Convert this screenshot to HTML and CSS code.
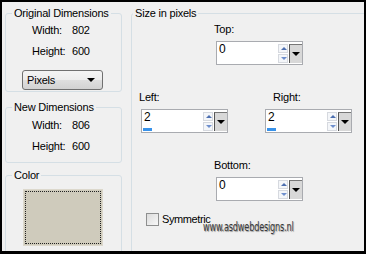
FILE: index.html
```html
<!DOCTYPE html>
<html lang="en">
<head>
  <meta charset="UTF-8">
  <title>Add Borders</title>
  <link rel="stylesheet" href="styles.css">
</head>
<body>
<div class="screen">
  <div class="dialog">
    <div class="side">
      <fieldset class="group orig">
        <legend>Original Dimensions</legend>
        <div class="inner">
          <div class="dims">
            <span>Width:</span><span>802</span>
            <span>Height:</span><span>600</span>
          </div>
          <div class="select"><span>Pixels</span><span class="caret"></span></div>
        </div>
      </fieldset>
      <fieldset class="group new">
        <legend>New Dimensions</legend>
        <div class="inner">
          <div class="dims">
            <span>Width:</span><span>806</span>
            <span>Height:</span><span>600</span>
          </div>
        </div>
      </fieldset>
      <fieldset class="group color">
        <legend>Color</legend>
        <div class="inner">
          <div class="swatch"><div class="swatch-inner"></div></div>
        </div>
      </fieldset>
    </div>

    <fieldset class="group size">
      <legend>Size in pixels</legend>
      <div class="inner">
        <div class="row center">
          <div class="field">
            <div class="label">Top:</div>
            <div class="spin">
              <div class="value"><span>0</span></div>
              <div class="arrows"><span class="up"></span><span class="down"></span></div>
              <div class="drop"><span class="caret"></span></div>
            </div>
          </div>
        </div>
        <div class="row split">
          <div class="field">
            <div class="label">Left:</div>
            <div class="spin">
              <div class="value"><span>2</span><i class="bar"></i></div>
              <div class="arrows"><span class="up"></span><span class="down"></span></div>
              <div class="drop"><span class="caret"></span></div>
            </div>
          </div>
          <div class="field">
            <div class="label indent">Right:</div>
            <div class="spin">
              <div class="value"><span>2</span><i class="bar"></i></div>
              <div class="arrows"><span class="up"></span><span class="down"></span></div>
              <div class="drop"><span class="caret"></span></div>
            </div>
          </div>
        </div>
        <div class="row center">
          <div class="field">
            <div class="label">Bottom:</div>
            <div class="spin">
              <div class="value"><span>0</span></div>
              <div class="arrows"><span class="up"></span><span class="down"></span></div>
              <div class="drop"><span class="caret"></span></div>
            </div>
          </div>
        </div>
        <div class="check"><span class="box"></span><span class="check-text">Symmetric</span></div>
        <div class="watermark">www.asdwebdesigns.nl</div>
      </div>
    </fieldset>
  </div>
</div>
</body>
</html>
```

FILE: styles.css
```css
body { margin: 0; background: #000; font-family: "Liberation Sans", Arial, sans-serif; font-size: 11px; line-height: 13px; letter-spacing: -0.2px; color: #000; }
.screen { width: 366px; height: 254px; overflow: hidden; }
.dialog {
  margin: 2px 2px 0 2px;
  height: 249px;
  background: #f0f0f0;
  display: flex;
  gap: 9px;
  overflow: hidden;
}

/* group boxes */
.group {
  margin: 0;
  padding: 0;
  min-width: 0;
  border: 1px solid #d5dfe5;
  border-radius: 3px;
  box-sizing: border-box;
}
.group legend { padding: 0 2px; margin-left: 6px; white-space: nowrap; }
.side { padding: 5px 0 0 3px; width: 117px; flex: none; }
.orig { height: 85px; }
.orig .inner { padding: 4px 0 0 26px; }
.new { height: 62px; margin-top: 9px; }
.new .inner { padding: 5px 0 0 26px; }
.color { height: 100px; margin-top: 6px; }
.color .inner { padding: 7px 0 0 17px; }

.dims { display: grid; grid-template-columns: 40px auto; row-gap: 8px; }
.select {
  margin: 12px 0 0 -10px;
  width: 81px;
  height: 20px;
  box-sizing: border-box;
  border: 1px solid #707070;
  border-radius: 3px;
  background: linear-gradient(#f4f4f4, #ececec 50%, #dfdfdf 50%, #d2d2d2);
  display: flex;
  align-items: center;
  justify-content: space-between;
  padding: 0 7px 0 4px;
}
.caret { width: 0; height: 0; border-left: 4px solid transparent; border-right: 4px solid transparent; border-top: 4px solid #000; }

.swatch { width: 80px; height: 57px; box-sizing: border-box; border: 1px solid #dcd8cc; background: #cfcbbc; padding: 1px; }
.swatch-inner { height: 100%; box-sizing: border-box; border: 1px dotted #222; }

/* size in pixels */
.size { width: 240px; flex: none; margin-top: 5px; height: 260px; }
.size legend { margin-left: 1px; }
.size .inner { padding: 3px 0 0 6px; position: relative; }
.row { display: flex; }
.row + .row { margin-top: 26px; }
.center { padding-left: 76px; }
.split { justify-content: space-between; width: 213px; padding-left: 1px; }
.label.indent { margin-left: 10px; }
.field .spin { margin: 5px 0 0 2px; }
.spin {
  width: 87px;
  height: 24px;
  box-sizing: border-box;
  border: 1px solid #a9abb0;
  background: #fff;
  display: flex;
}
.value { flex: 1; display: flex; flex-direction: column; justify-content: space-between; padding-left: 2px; font-size: 12px; line-height: 14px; }
.bar { display: block; width: 9px; height: 3px; margin: 0 0 1px -1px; background: #3892ea; }
.arrows { width: 10px; display: flex; flex-direction: column; gap: 1px; padding: 2px 1px 0 0; }
.arrows span {
  height: 7px;
  border: 1px solid #d6d9df;
  background: #f4f6f9;
  position: relative;
}
.arrows .up::after, .arrows .down::after {
  content: "";
  position: absolute;
  left: 2px;
  top: 2px;
  border-left: 3px solid transparent;
  border-right: 3px solid transparent;
}
.arrows .up::after { border-bottom: 3px solid #4d6fb0; }
.arrows .down::after { border-top: 3px solid #6f8fcd; }
.drop {
  width: 12px;
  margin: 2px 0 1px;
  border-left: 1px solid #555;
  border-top: 1px solid #777;
  background: #d8d8d8;
  display: flex;
  align-items: center;
  justify-content: center;
}

.check { margin: 12px 0 0 8px; display: flex; align-items: center; gap: 3px; }
.check-text { letter-spacing: -0.4px; }
.check .box {
  width: 13px;
  height: 13px;
  box-sizing: border-box;
  border: 1px solid #8e8f8f;
  background: linear-gradient(135deg, #dcdcdc, #f8f8f8);
}
.watermark {
  position: absolute;
  left: 71px;
  top: 200px;
  font-family: "DejaVu Sans", sans-serif;
  font-stretch: condensed;
  font-size: 13px;
  line-height: 14px;
  letter-spacing: -0.3px;
  color: #3a3a3a;
  text-shadow: 1px 1px 1px #9a9a9a;
  transform: scaleX(0.7);
  transform-origin: left top;
}
```
